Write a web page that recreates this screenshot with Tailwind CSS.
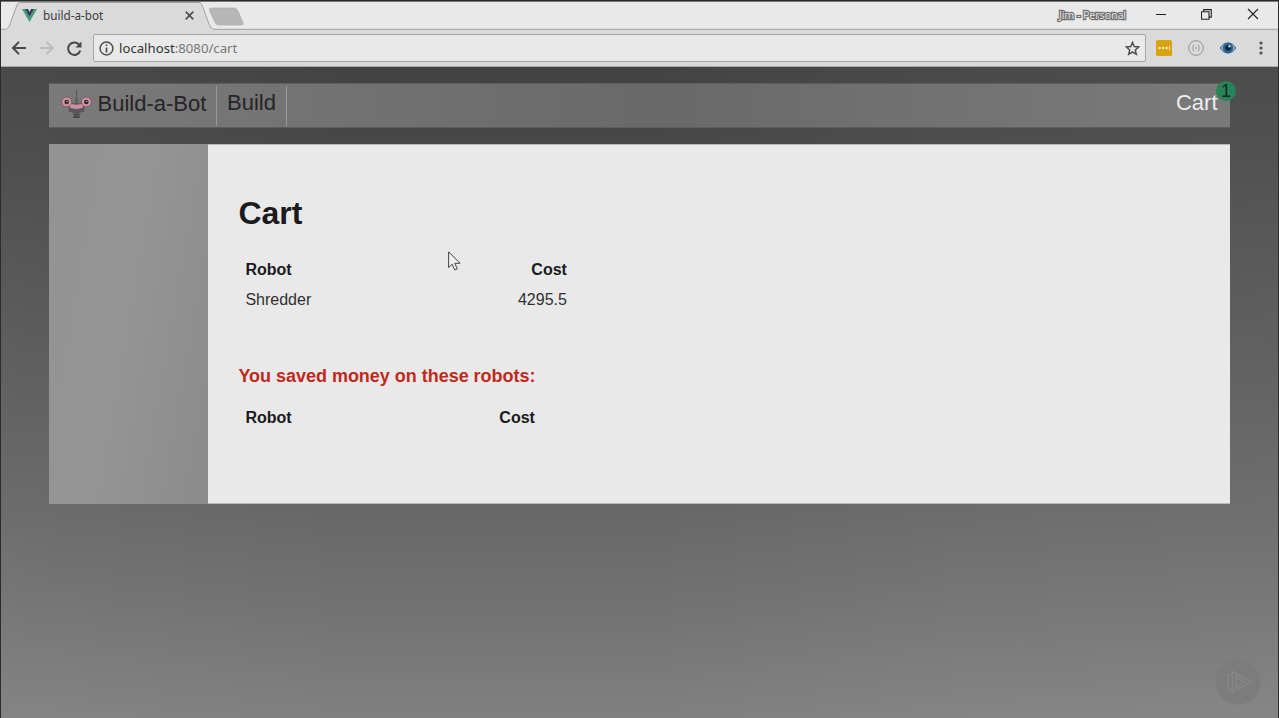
<!DOCTYPE html>
<html lang="en">
<head>
<meta charset="utf-8">
<title>build-a-bot</title>
<script src="https://cdn.jsdelivr.net/npm/@tailwindcss/browser@4"></script>
</head>
<body class="w-[1279px] h-[718px] overflow-hidden bg-[#2c2c2c] pt-px px-px font-['Liberation_Sans',sans-serif]">
<div class="flex flex-col h-[717px] relative">
  <!-- Tab strip -->
  <div class="relative h-[29px] shrink-0 bg-[#e9e9e9] border-t border-[#777] flex items-center font-['Noto_Sans',sans-serif] text-[#3c3c3c]">
    <svg class="absolute left-0 top-0 w-full h-[28px]" width="1277" height="28" viewBox="1 2 1277 28" fill="none">
      <path d="M1 29.5H6C8 29 9 27 10 24L17 5Q18 2.500 20 2.500H199Q201 2.500 202 5L209 24Q211 29.500 214 29.500H1278V31H1Z" fill="#dadada" stroke="none"/>
      <path d="M1 29.300H5.500C8 29 9 27 10 24L17 5Q18 2.500 20 2.500H199Q201 2.500 202 5L209 24Q211 29.300 214 29.300H1278" stroke="#a2a2a2"/>
      <path d="M211.500 8H233.500Q236.500 8 237.500 10L243 22.500Q244 25 241 25H219Q216 25 215 22.500L209.500 10.500Q208.500 8 211.500 8Z" fill="#b7b7b7" stroke="#aaa" stroke-width=".7"/>
    </svg>
    <div class="relative flex w-full items-center pl-[21px] pb-px h-full">
      <svg class="w-[15px] h-[13px]" viewBox="0 0 15 13"><path d="M0 0H3L7.500 8 12 0H15L7.500 13Z" fill="#469b79"/><path d="M3 0H6L7.500 3 9 0H12L7.500 8Z" fill="#2d4054"/></svg>
      <span class="w-[61px] ml-[6px] mb-[2px] text-[11.700px] leading-4 whitespace-nowrap">build-a-bot</span>
      <svg class="ml-[81px] w-[9px] h-[9px]" viewBox="0 0 9 9" stroke="#505050" stroke-width="1.700"><path d="M.7.7 8.300 8.300M8.300.7.7 8.300"/></svg>
      <span class="ml-auto mr-[30px] mb-[2px] text-[10.700px] leading-4 text-[#e2e2e2] [-webkit-text-stroke:2.400px_#707070] [paint-order:stroke_fill] tracking-[-0.1px]">Jim - Personal</span>
      <div class="flex items-center pb-[3px]">
        <svg class="w-[10px] h-[10px]" viewBox="0 0 10 10" stroke="#222"><path d="M0 5.500H10"/></svg>
        <svg class="ml-[35px] w-[11px] h-[11px]" viewBox="0 0 11 11" fill="none" stroke="#222" stroke-width="1.100"><path d="M.5 2.700H8V10.200H.5ZM2.700 2.500V.6H10.300V8.100H8.200"/></svg>
        <svg class="ml-[35px] mr-[19px] w-[12px] h-[12px]" viewBox="0 0 12 12" stroke="#222" stroke-width="1.100"><path d="M1 1 11 11M11 1 1 11"/></svg>
      </div>
    </div>
  </div>
  <!-- Toolbar -->
  <div class="h-[37px] shrink-0 bg-[#dadada] border-b border-[#aaa] flex items-center pl-[10px] pr-[15px] font-['Noto_Sans',sans-serif]">
    <svg class="w-[16px] h-[14px]" viewBox="0 0 16 14" fill="none" stroke="#484848" stroke-width="2"><path d="M15 7H2M8 .9 1.900 7 8 13.100"/></svg>
    <svg class="ml-[13px] w-[14px] h-[14px]" viewBox="0 0 14 14" fill="none" stroke="#bcbcbc" stroke-width="2"><path d="M0 7H12M6.500 1 12.500 7 6.500 13"/></svg>
    <svg class="ml-[13px] w-[15px] h-[15px]" viewBox="0 0 15 15"><path d="M12.700 4.500A6.200 6.200 0 1 0 13.300 9.500" fill="none" stroke="#484848" stroke-width="2"/><path d="M14.500.5V6.500H8.500Z" fill="#484848"/></svg>
    <div class="ml-[11px] mr-[10px] h-[28px] w-[1053px] rounded-[2px] border border-[#a6a6a6] bg-[#e9e9e9] flex items-center pl-[5px] pr-[5px]">
      <svg class="w-[15px] h-[15px]" viewBox="0 0 15 15" fill="none" stroke="#505050" stroke-width="1.500"><circle cx="7.500" cy="7.500" r="6.400"/><path d="M7.500 6.500V11.500M7.500 3.500V5.100" stroke-width="1.700"/></svg>
      <span class="ml-[5px] text-[13.200px] leading-5 text-[#777] whitespace-nowrap"><span class="text-[#333]">localhost</span>:8080/cart</span>
      <svg class="ml-auto w-[15px] h-[15px]" viewBox="0 0 15 15" fill="none" stroke="#505050" stroke-width="1.500"><path d="M7.500 1.500 9.200 5.600 13.700 6 10.300 9 11.300 13.300 7.500 11 3.700 13.300 4.700 9 1.300 6 5.800 5.600Z"/></svg>
    </div>
    <svg class="w-[16px] h-[16px]" viewBox="0 0 16 16"><rect width="16" height="16" rx="1.500" fill="#d9a311"/><g fill="#f2e3b5"><circle cx="3.500" cy="8" r="1.300"/><circle cx="7" cy="8" r="1.300"/><circle cx="10.500" cy="8" r="1.300"/><path d="M13 6h1v4h-1z"/></g></svg>
    <svg class="ml-[16px] w-[16px] h-[16px]" viewBox="0 0 16 16" fill="none" stroke="#919191"><circle cx="8" cy="8" r="7.300"/><path d="M6.300 5Q5.200 5 5.200 6.200V7.300L4.300 8 5.200 8.700V9.800Q5.200 11 6.300 11M9.700 5Q10.800 5 10.800 6.200V7.300L11.700 8 10.800 8.700V9.800Q10.800 11 9.700 11M7 8h2" stroke-width=".9"/></svg>
    <svg class="ml-[16px] w-[16px] h-[12px]" viewBox="0 0 16 12"><path d="M0 6Q3.500 .7 8 .7T16 6Q12.500 11.300 8 11.300T0 6Z" fill="#8fa9bb" stroke="#375b78" stroke-width=".8"/><circle cx="8" cy="6" r="5.100" fill="#1d659f"/><circle cx="8.300" cy="5.700" r="2.800" fill="#111d2b"/><circle cx="9.500" cy="4.300" r="1.200" fill="#c4d8e7"/></svg>
    <svg class="ml-auto w-[4px] h-[14px]" viewBox="0 0 4 14" fill="#505050"><circle cx="2" cy="2" r="1.600"/><circle cx="2" cy="7" r="1.600"/><circle cx="2" cy="12" r="1.600"/></svg>
  </div>
  <!-- Page -->
  <main class="relative grow bg-[linear-gradient(90deg,rgba(255,255,255,0.035)_0%,rgba(255,255,255,0)_28%,rgba(255,255,255,0)_50%,rgba(255,255,255,0.035)_75%,rgba(255,255,255,0.05)_100%),linear-gradient(180deg,#434343_0%,#484848_13%,#5c5c5c_50%,#676767_68%,#727272_83%,#808080_100%)] px-[48px] pt-[16px]">
    <header class="relative h-[45px] border-y border-[#5d5d5d] bg-[linear-gradient(90deg,#7a7a7a_0%,#727272_25%,#696969_52%,#727272_75%,#7a7a7a_100%)] flex items-start pt-[2px] text-[22px] leading-[34px] text-[#252427]">
      <a class="flex items-start h-[40px] pl-[12px] w-[168px] border-r border-[#999]">
        <svg class="mt-[4px] w-[31px] h-[30px] shrink-0" viewBox="0 0 30 30" fill="none" preserveAspectRatio="none">
          <path d="M15 0V12" stroke="#555" stroke-width="1"/><path d="M13.500 8h3v6h-3z" fill="#626262"/>
          <path d="M7 14Q15 14 23 14L22 20Q15 25 8 20Z" fill="#59575d"/>
          <path d="M7 13Q15 15.500 23 13L21 18.500Q15 20.500 9 18.500Z" fill="#cc929f" stroke="#59464e" stroke-width=".8"/>
          <circle cx="5.500" cy="12" r="4.900" fill="#cf929f" stroke="#62454e" stroke-width=".6"/><circle cx="24.500" cy="12" r="4.900" fill="#cf929f" stroke="#62454e" stroke-width=".6"/>
          <circle cx="5.500" cy="12" r="2.200" fill="#302731"/><circle cx="24.500" cy="12" r="2.200" fill="#302731"/><circle cx="5.900" cy="11.400" r=".6" fill="#ddd"/><circle cx="24.900" cy="11.400" r=".6" fill="#ddd"/>
          <path d="M8 20.500Q15 25 22 20.500M8 18.500V22M22 18.500V22" stroke="#555458"/><path d="M12 23.500h6v4.500h-6z" fill="#454545"/><path d="M12 25.500h6" stroke="#777" stroke-width=".6"/>
        </svg>
        <span class="ml-[5.500px] mt-px whitespace-nowrap">Build-a-Bot</span>
      </a>
      <a class="h-[40px] w-[70px] pl-[10px] border-r border-[#999]">Build</a>
      <a class="ml-auto mr-[12.500px] text-[#eee]">Cart</a>
      <span class="absolute right-[-6px] top-[-3px] w-[20px] h-[20px] rounded-full bg-[#278359] text-[18px] leading-[21px] text-center text-[#16291f]">1</span>
    </header>
    <div class="mt-[16px] h-[360px] flex">
      <aside class="w-[159.400px] bg-[linear-gradient(100deg,#939393_0%,#959595_45%,#8b8b8b_100%)]"></aside>
      <section class="grow bg-[#e9e9e9] border-y border-[#b9b9b9] pl-[30px] pt-[50px] text-[#1b1a1c]">
        <h1 class="text-[32px] leading-[37px] font-bold">Cart</h1>
        <table class="mt-[23px] w-[335.500px] text-[16px] leading-[18px]">
          <tr class="h-[30px]"><th class="text-left pl-[7px]">Robot</th><th class="text-right pr-[7px]">Cost</th></tr>
          <tr class="h-[30px] text-[#303030]"><td class="pl-[7px]">Shredder</td><td class="text-right pr-[7px]">4295.5</td></tr>
        </table>
        <h3 class="mt-[51px] text-[18px] leading-[20px] font-bold text-[#c02a1c] whitespace-nowrap tracking-[-0.02px]">You saved money on these robots:</h3>
        <table class="mt-[17px] w-[303.500px] text-[16px] leading-[18px]">
          <tr class="h-[30px]"><th class="text-left pl-[7px]">Robot</th><th class="text-right pr-[7px]">Cost</th></tr>
        </table>
      </section>
    </div>
  </main>
  <!-- Player watermark -->
  <svg class="absolute left-[1214px] top-[658px] w-[46px] h-[46px]" viewBox="0 0 46 46" fill="none"><circle cx="23" cy="23" r="22.500" fill="#7c7c7c"/><path d="M17.500 12.500 36 23 17.500 33.500ZM17 15.500H13V30.500H17M21 18 29.500 23 21 28Z" stroke="#868686" stroke-width="1.700"/></svg>
  <!-- Mouse pointer -->
  <svg class="absolute left-[447px] top-[250px] w-[13px] h-[20px]" viewBox="0 0 13 20"><path d="M.6.8V16.500L4.200 13.200 6.800 19 9.300 17.900 6.800 12.300H12Z" fill="#eee" stroke="#444"/></svg>
</div>
</body>
</html>
